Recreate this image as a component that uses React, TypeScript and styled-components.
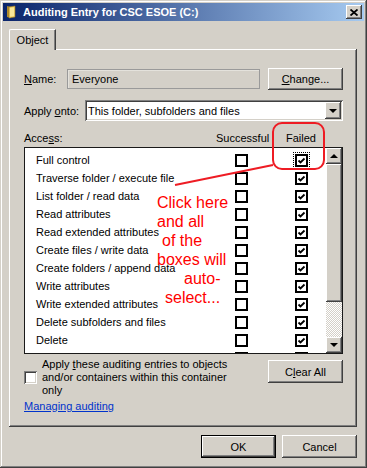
import styled, { createGlobalStyle } from "styled-components";

const GlobalStyle = createGlobalStyle`
  html, body {
    margin: 0;
    padding: 0;
    background: #d4d0c8;
  }
  body {
    font-family: "Liberation Sans", Arial, sans-serif;
    font-size: 11px;
    color: #000;
  }
`;

const raised = `
  box-shadow: inset -1px -1px #404040, inset 1px 1px #fff,
    inset -2px -2px #808080, inset 2px 2px #d4d0c8;
`;

const sunken = `
  box-shadow: inset 1px 1px #808080, inset -1px -1px #fff,
    inset 2px 2px #404040, inset -2px -2px #d4d0c8;
`;

// last entry is scrolled mostly out of view, only its boxes peek in
const permissions: { id: number; label: string }[] = [
  { id: 1, label: "Full control" },
  { id: 2, label: "Traverse folder / execute file" },
  { id: 3, label: "List folder / read data" },
  { id: 4, label: "Read attributes" },
  { id: 5, label: "Read extended attributes" },
  { id: 6, label: "Create files / write data" },
  { id: 7, label: "Create folders / append data" },
  { id: 8, label: "Write attributes" },
  { id: 9, label: "Write extended attributes" },
  { id: 10, label: "Delete subfolders and files" },
  { id: 11, label: "Delete" },
  { id: 12, label: "" },
];

const notes: { text: string; indent: number }[] = [
  { text: "Click here", indent: 0 },
  { text: "and all", indent: 0 },
  { text: "of the", indent: 5 },
  { text: "boxes will", indent: 0 },
  { text: "auto-", indent: 27 },
  { text: "select...", indent: 8 },
];

const Window = styled.div`
  position: relative;
  width: 367px;
  height: 468px;
  box-sizing: border-box;
  padding: 3px;
  background: #d4d0c8;
  display: flex;
  flex-direction: column;
  box-shadow: inset -1px -1px #404040, inset 1px 1px #d4d0c8,
    inset -2px -2px #808080, inset 2px 2px #fff;
  overflow: hidden;
`;

const TitleBar = styled.div`
  height: 18px;
  display: flex;
  align-items: center;
  padding: 0 2px 0 3px;
  background: linear-gradient(to right, #0a246a, #a6caf0);
`;

const Title = styled.span`
  flex: 1;
  margin-left: 7px;
  color: #fff;
  font-weight: bold;
  font-size: 11px;
  white-space: nowrap;
`;

const CloseButton = styled.div`
  width: 16px;
  height: 14px;
  display: flex;
  align-items: center;
  justify-content: center;
  background: #d4d0c8;
  ${raised}
`;

const Body = styled.div`
  padding: 8px 7px 0 6px;
  display: flex;
  flex-direction: column;
`;

const TabStrip = styled.div`
  display: flex;
  height: 20px;
  position: relative;
  z-index: 1;
`;

const Tab = styled.div`
  width: 47px;
  height: 21px;
  box-sizing: border-box;
  display: flex;
  align-items: center;
  justify-content: center;
  padding-bottom: 1px;
  background: #d4d0c8;
  border-top: 1px solid #fff;
  border-left: 1px solid #fff;
  border-right: 1px solid #404040;
  border-top-left-radius: 2px;
  box-shadow: inset -1px 0 #808080;
`;

const Panel = styled.div`
  width: 348px;
  height: 378px;
  box-sizing: border-box;
  padding: 19px 14px 0 15px;
  display: flex;
  flex-direction: column;
  ${raised}
`;

const FieldRow = styled.div<{ $top?: number }>`
  display: flex;
  align-items: center;
  margin-top: ${(p) => p.$top ?? 0}px;
`;

const Label = styled.span<{ $width: number }>`
  width: ${(p) => p.$width}px;
  flex: none;
  white-space: nowrap;
`;

const ReadOnlyField = styled.div`
  width: 193px;
  height: 20px;
  box-sizing: border-box;
  padding: 0 5px;
  display: flex;
  align-items: center;
  background: #d4d0c8;
  box-shadow: inset 1px 1px #9a9a9a, inset -1px -1px #9a9a9a,
    inset 2px 2px #e4e2dc;
`;

const Button = styled.div<{ $default?: boolean }>`
  width: 75px;
  height: 23px;
  box-sizing: border-box;
  display: flex;
  align-items: center;
  justify-content: center;
  background: #d4d0c8;
  border: ${(p) => (p.$default ? "1px solid #000" : "none")};
  ${raised}
`;

const SmallButton = styled(Button)`
  height: 22px;
  margin-left: 8px;
`;

const ClearButton = styled(Button)`
  margin-top: 2px;
`;

const Select = styled.div`
  flex: 1;
  height: 21px;
  box-sizing: border-box;
  padding: 2px;
  display: flex;
  align-items: center;
  background: #fff;
  ${sunken}
`;

const SelectText = styled.span`
  flex: 1;
  padding-left: 1px;
`;

const ArrowButton = styled.div`
  width: 16px;
  height: 17px;
  display: flex;
  align-items: center;
  justify-content: center;
  background: #d4d0c8;
  ${raised}
`;

const Arrow = styled.span<{ $up?: boolean }>`
  width: 0;
  height: 0;
  border-left: 4px solid transparent;
  border-right: 4px solid transparent;
  ${(p) =>
    p.$up ? "border-bottom: 4px solid #000;" : "border-top: 4px solid #000;"}
`;

const AccessHeader = styled.div`
  margin-top: 9px;
  height: 16px;
  line-height: 16px;
  display: grid;
  grid-template-columns: 1fr 70px 57px;
`;

const ListBox = styled.div`
  margin-top: 1px;
  height: 207px;
  box-sizing: border-box;
  border: 1px solid #1a1a1a;
  background: #fff;
  display: flex;
`;

const Rows = styled.div`
  flex: 1;
  padding-top: 3px;
  overflow: hidden;
`;

const Row = styled.div`
  height: 18px;
  display: grid;
  grid-template-columns: 1fr 13px 13px;
  column-gap: 47px;
  align-items: center;
  padding: 0 18px 0 11px;
  white-space: nowrap;
`;

const Box = styled.div<{ $focus?: boolean }>`
  width: 13px;
  height: 13px;
  box-sizing: border-box;
  border: 2px solid #000;
  background: #fff;
  display: flex;
  align-items: center;
  justify-content: center;
  outline: ${(p) => (p.$focus ? "1px dotted #000" : "none")};
  outline-offset: 1px;
`;

const ScrollBar = styled.div`
  width: 16px;
  display: flex;
  flex-direction: column;
`;

const ScrollButton = styled(ArrowButton)`
  height: 16px;
`;

const Thumb = styled.div`
  height: 138px;
  background: #d4d0c8;
  ${raised}
`;

const Track = styled.div`
  flex: 1;
  background-color: #fff;
  background-image: repeating-conic-gradient(#d4d0c8 0 25%, #fff 0 50%);
  background-size: 2px 2px;
`;

const BottomRow = styled.div`
  margin-top: 4px;
  display: flex;
  justify-content: space-between;
  align-items: flex-start;
`;

const InheritOption = styled.div`
  display: flex;
  align-items: center;
  gap: 5px;
`;

const PlainCheck = styled.div`
  width: 13px;
  height: 13px;
  background: #fff;
  ${sunken}
`;

const OptionText = styled.div`
  line-height: 13px;
  white-space: nowrap;
`;

const HelpLink = styled.a`
  margin-top: 3px;
  line-height: 13px;
  color: #0033cc;
  text-decoration: underline;
  align-self: flex-start;
`;

const Footer = styled.div`
  margin-top: 8px;
  display: flex;
  justify-content: flex-end;
  gap: 6px;
`;

const Overlay = styled.svg`
  position: absolute;
  left: 0;
  top: 0;
  pointer-events: none;
`;

const Note = styled.div`
  position: absolute;
  left: 157px;
  top: 193px;
  color: #ff0000;
  font-family: "Liberation Sans", Arial, sans-serif;
  font-size: 16px;
  line-height: 19px;
  white-space: nowrap;
`;

const NoteLine = styled.div<{ $indent: number }>`
  padding-left: ${(p) => p.$indent}px;
`;

const FolderIcon = () => (
  <svg width="10" height="14" viewBox="0 0 10 14">
    <path d="M1 1 L5 2 L5 13 L1 12 Z" fill="#b08a2c" />
    <path d="M3 2 L9 1 L9 12 L3 13 Z" fill="#f4d46a" stroke="#a07a20" strokeWidth="0.6" />
    <path d="M4 3 L8 2.4 L8 11 L4 11.6 Z" fill="#fbe898" />
  </svg>
);

const CloseGlyph = () => (
  <svg width="8" height="7" viewBox="0 0 8 7">
    <path d="M0.5 0.5 L7.5 6.5 M7.5 0.5 L0.5 6.5" stroke="#000" strokeWidth="1.8" />
  </svg>
);

const Tick = () => (
  <svg width="9" height="9" viewBox="0 0 9 9">
    <path d="M1.5 4.5 L3.5 6.5 L7.5 2.5" fill="none" stroke="#000" strokeWidth="1.8" />
  </svg>
);

export default function App() {
  return (
    <>
      <GlobalStyle />
      <Window>
        <TitleBar>
          <FolderIcon />
          <Title>Auditing Entry for CSC ESOE (C:)</Title>
          <CloseButton>
            <CloseGlyph />
          </CloseButton>
        </TitleBar>
        <Body>
          <TabStrip>
            <Tab>Object</Tab>
          </TabStrip>
          <Panel>
            <FieldRow>
              <Label $width={43}>
                <u>N</u>ame:
              </Label>
              <ReadOnlyField>Everyone</ReadOnlyField>
              <SmallButton>
                <u>C</u>hange...
              </SmallButton>
            </FieldRow>
            <FieldRow $top={10}>
              <Label $width={61}>
                Apply <u>o</u>nto:
              </Label>
              <Select>
                <SelectText>This folder, subfolders and files</SelectText>
                <ArrowButton>
                  <Arrow />
                </ArrowButton>
              </Select>
            </FieldRow>
            <AccessHeader>
              <span>
                Acce<u>s</u>s:
              </span>
              <span>Successful</span>
              <span>Failed</span>
            </AccessHeader>
            <ListBox>
              <Rows>
                {permissions.map(({ id, label }) => (
                  <Row key={id}>
                    <span>{label}</span>
                    <Box />
                    <Box $focus={id === 1}>
                      <Tick />
                    </Box>
                  </Row>
                ))}
              </Rows>
              <ScrollBar>
                <ScrollButton>
                  <Arrow $up />
                </ScrollButton>
                <Thumb />
                <Track />
                <ScrollButton>
                  <Arrow />
                </ScrollButton>
              </ScrollBar>
            </ListBox>
            <BottomRow>
              <InheritOption>
                <PlainCheck />
                <OptionText>
                  Apply <u>t</u>hese auditing entries to objects
                  <br />
                  and/or containers within this container
                  <br />
                  only
                </OptionText>
              </InheritOption>
              <ClearButton>
                C<u>l</u>ear All
              </ClearButton>
            </BottomRow>
            <HelpLink>Managing auditing</HelpLink>
          </Panel>
          <Footer>
            <Button $default>OK</Button>
            <Button>Cancel</Button>
          </Footer>
        </Body>
        <Overlay width="367" height="468" viewBox="0 0 367 468">
          <rect x="273" y="123" width="51" height="46" rx="9" fill="none" stroke="#ee1c24" strokeWidth="2" />
          <line x1="175" y1="185" x2="273" y2="165" stroke="#ee1c24" strokeWidth="2" />
        </Overlay>
        <Note>
          {notes.map(({ text, indent }) => (
            <NoteLine key={text} $indent={indent}>
              {text}
            </NoteLine>
          ))}
        </Note>
      </Window>
    </>
  );
}
